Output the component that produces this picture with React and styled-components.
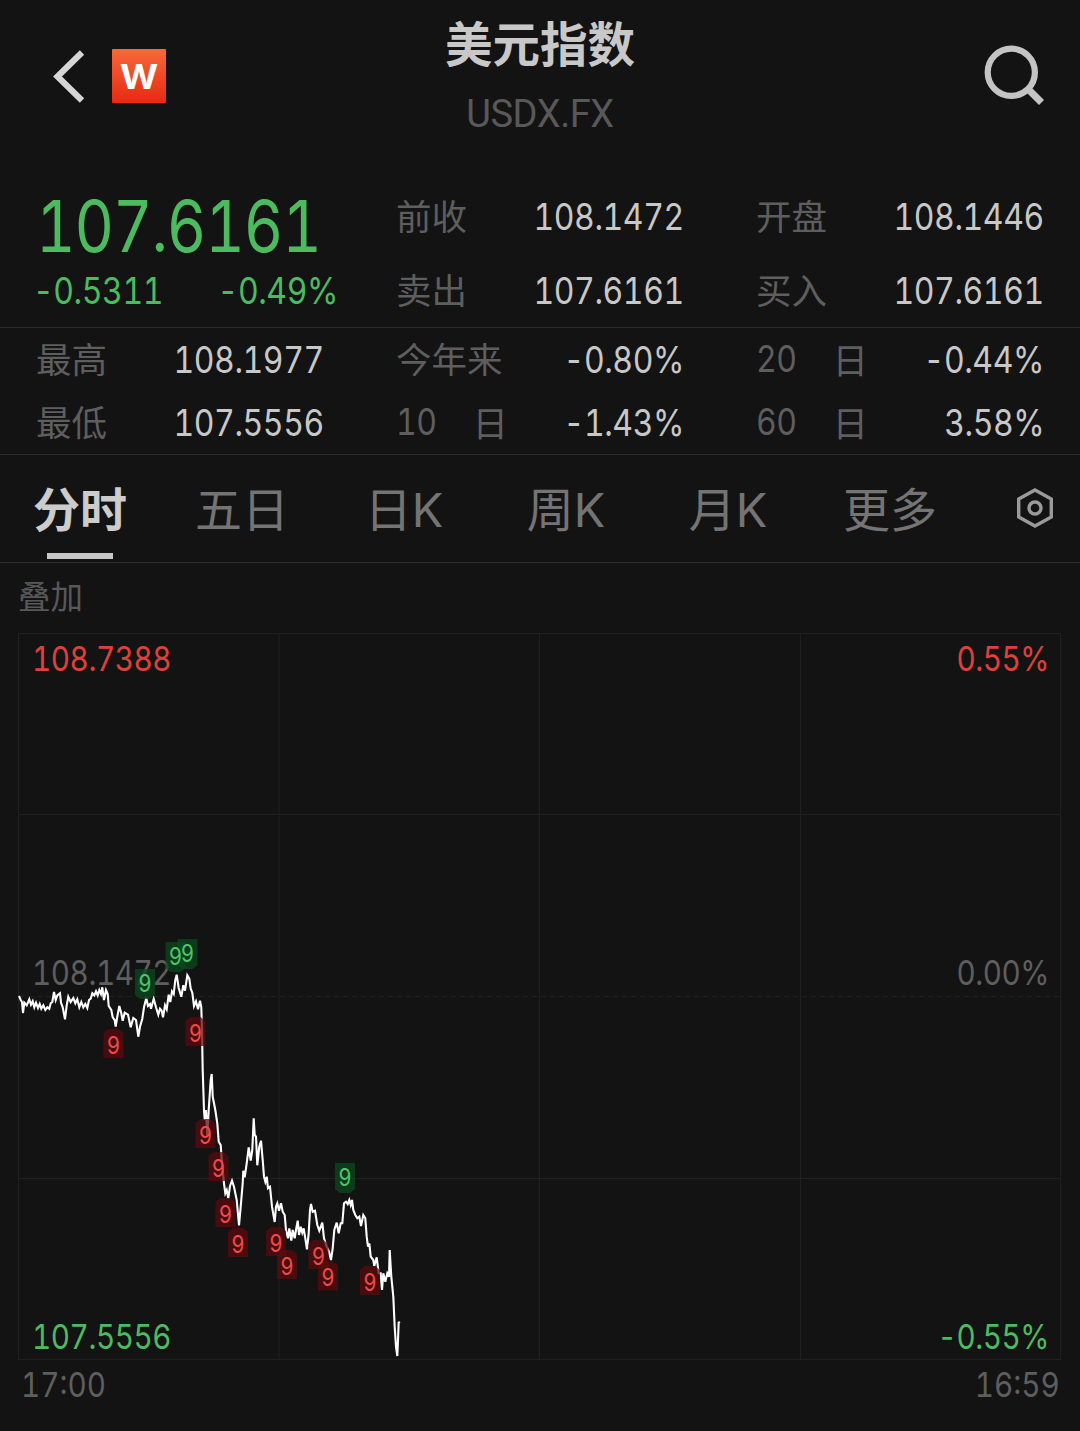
import React from 'react';
import styled, { createGlobalStyle } from 'styled-components';

const GlobalStyle = createGlobalStyle`
  * {
    box-sizing: border-box;
  }
  body {
    margin: 0;
    background: #131313;
    font-family: Inter, 'Noto Sans CJK SC', sans-serif;
    color: #c8c8c8;
  }
`;

const Page = styled.div`
  width: 1080px;
  height: 1431px;
  overflow: hidden;
  background: #131313;
`;

const Header = styled.header`
  display: grid;
  grid-template-columns: 166px 1fr 166px;
  height: 180px;
`;

const HeaderLeft = styled.div`
  display: flex;
  align-items: center;
  justify-content: space-between;
  height: 54px;
  margin-top: 49px;
  padding-left: 50px;
`;

const HeaderRight = styled.div`
  display: flex;
  justify-content: flex-end;
  margin-top: 43px;
  padding-right: 34px;
`;

const Logo = styled.div`
  display: flex;
  justify-content: center;
  width: 54px;
  height: 54px;
  border-radius: 1px;
  background: linear-gradient(#f8683a, #e62a12);
  color: #fff;
  font: 600 46px/47px Inter, sans-serif;
`;

const Titles = styled.div`
  display: flex;
  flex-direction: column;
  align-items: center;
`;

const Title = styled.h1`
  margin: 11px 0 0;
  font-family: 'Noto Sans CJK SC', sans-serif;
  font-size: 47.5px;
  line-height: 62px;
  font-weight: 700;
`;

const Code = styled.div`
  margin-top: 18px;
  font-family: Roboto, sans-serif;
  font-size: 38px;
  line-height: 46px;
  letter-spacing: -0.4px;
  color: #585858;
`;

const Quote = styled.section`
  display: grid;
  grid-template-columns: repeat(3, 288px);
  column-gap: 72px;
  height: 148px;
  padding: 0 36px;
  border-bottom: 1px solid #2b2b2b;
`;

const Column = styled.div`
  display: flex;
  flex-direction: column;
`;

const Price = styled.div`
  height: 86px;
  font-size: 71px;
  line-height: 93px;
  letter-spacing: -1.3px;
  font-feature-settings: 'tnum', 'calt' 0;
  transform: scaleX(0.86);
  transform-origin: left;
  color: #4cbb60;
`;

const Change = styled.div`
  display: flex;
  justify-content: space-between;
  width: 305px;
  margin-left: -3px;
  line-height: 50px;
`;

const Stats = styled.section`
  display: grid;
  grid-template-columns: repeat(3, 288px);
  grid-template-rows: 63px 63px;
  column-gap: 72px;
  height: 127px;
  padding: 0 36px;
  border-bottom: 1px solid #2b2b2b;
`;

const Item = styled.div`
  display: flex;
  align-items: center;
  justify-content: space-between;
  height: ${(props) => props.$height}px;
`;

const Label = styled.span`
  display: flex;
  justify-content: space-between;
  min-width: ${(props) => (props.$spread ? '112px' : '0')};
  margin-bottom: ${(props) => (props.$spread ? '1px' : '4px')};
  font-family: 'Noto Sans CJK SC', sans-serif;
  font-size: 35.5px;
  line-height: 50px;
  color: #5e5e5e;
`;

const Value = styled.span`
  font-family: Inter, sans-serif;
  font-size: 37.2px;
  line-height: 50px;
  letter-spacing: -0.5px;
  font-feature-settings: 'tnum', 'calt' 0;
  transform: scaleX(0.86);
  transform-origin: ${(props) => props.$origin || 'right'};
  color: ${(props) => props.$color || '#c8c8c8'};
`;

const Tabs = styled.nav`
  display: flex;
  height: 108px;
  border-bottom: 1px solid #2b2b2b;
`;

const Tab = styled.div`
  display: flex;
  flex-direction: column;
  align-items: center;
  width: 162px;
  padding: 21px 2px 0 0;
  font-family: Inter, 'Noto Sans CJK SC', sans-serif;
  font-size: 47px;
  line-height: 68px;
  font-weight: ${(props) => (props.$active ? 700 : 400)};
  color: ${(props) => (props.$active ? '#cccccc' : '#747474')};

  &::after {
    content: '';
    width: 66px;
    height: 6px;
    margin-top: 9px;
    background: ${(props) => (props.$active ? '#c8c8c8' : 'transparent')};
  }
`;

const Settings = styled.div`
  margin: 31px 0 0 43px;
`;

const Overlay = styled.div`
  height: 70px;
  padding: 11px 0 0 18px;
  font-size: 32.5px;
  line-height: 48px;
  color: #585858;
`;

const Chart = styled.svg`
  display: block;
  margin-left: 18px;
  font-family: Inter, sans-serif;
  font-feature-settings: 'tnum', 'calt' 0;
`;

const Times = styled.div`
  display: flex;
  justify-content: space-between;
  padding: 0 20px 0 21px;
  line-height: 48px;
`;

const Time = styled.span`
  font-size: 34.5px;
  font-feature-settings: 'tnum';
  transform: scaleX(0.86);
  transform-origin: ${(props) => props.$origin};
  color: #5e5e5e;
`;

const stats = [
  ['最高', '108.1977'],
  ['今年来', '-0.80%'],
  ['20 日', '-0.44%'],
  ['最低', '107.5556'],
  ['10 日', '-1.43%'],
  ['60 日', '3.58%'],
];

const tabs = ['分时', '五日', '日K', '周K', '月K', '更多'];

const line = `19,996 20.7,1000 22,1002 23,1013 24.3,1002.7 26.7,1005.3 29.3,999.3 31,1004.7 32.7,1001.3
34.3,1007.3 36,1002.7 38,1008 39.7,1004 41.3,1008.7 43.3,1005.3 45.3,1010 47.3,1007.3 49.3,1008.7
50.7,1003.3 52.3,1002 54,992 55.7,1000 57.3,995.3 60,993.3 61,1002.7 62.7,1007.3 65,1019.3 66.7,1005.3
68.3,996.7 70.7,1002 73.3,998 75.3,1003.3 77.3,999.3 79.3,1007.3 81.3,1002 83.3,1007.3 85.3,1004
87.3,1008 89,1000 90.7,998.7 92.3,993.3 94.3,995.3 96,991.3 97.7,995.3 99.3,990 101,994 102.3,987.3
104,1000 106,990 107.7,994 108.7,1006 111.3,1010 112.7,1017.3 114.7,1020 115.7,1026.7 117.3,1016.7
119.3,1006 121.3,1013.3 122.7,1020.7 124.7,1012.7 128,1014.7 130.7,1027.3 133.3,1018 136,1020
138.3,1036.7 140,1026.7 142.3,1018.7 144,1007.3 146.3,998 148,1006 150,1004 151,1008.7 153.7,998.7
156,1007.3 158.3,1014.7 160,1008.7 161.7,1010.7 163,1017.3 165,1005.3 166.7,1009.3 168.7,994.7
170.3,1002 172,991.3 173.7,994 175.3,980 176.7,974.7 178.7,988 181.3,996.7 183.3,985.3 185,990.7
187.3,975.3 189.3,978.7 190.7,988.7 192.3,992.7 194,1006 196,1001.3 198,1009.3 200,1000.7 201.3,1007.3
202,1030 202.7,1070 204,1110 204.7,1120 206,1110 207.3,1136.7 208.7,1110 210.7,1080 211.7,1074
212.7,1096.7 215.3,1110 217.3,1123.3 218.7,1141.7 220.7,1145 222,1163.3 224,1183.3 225.3,1193.3
226.7,1190 228.3,1198.3 230,1186 232,1180.7 234,1186.7 235.3,1193.3 236.7,1200 239,1225.3 240.7,1206.7
242.7,1183.3 243.3,1170.7 244.7,1177.3 246.7,1163.3 248.7,1147.3 250.7,1160.7 252.3,1150 253.7,1118.3
254.7,1135 256,1136.7 257.3,1165.3 259.3,1146.7 261,1140.7 262.7,1160 264,1176.7 265.3,1181.7
266.7,1176.7 268,1188.3 270,1186.7 272,1206.7 274.7,1222 276,1206.7 277.3,1203.3 279,1210.7 281,1203.3
282.7,1211.7 284.7,1215 286,1230 288,1238.3 289.3,1228.3 291.3,1240.7 292.7,1230 294.7,1238.3 296,1230
297.7,1220.7 299,1235 300.7,1226.7 302.3,1232.7 303.7,1228.3 305.3,1238.3 307,1249.3 308.7,1233.3
310,1210 311,1204 312.7,1211.7 315,1210.7 317.3,1225 319.3,1230.7 322.3,1222.7 324,1238.3 326.7,1246.7
329,1251.7 331,1260 332.7,1248.3 334.3,1230 336.7,1222.7 338.7,1233.3 340.7,1223.3 342.3,1223.3
344,1203.3 346,1201.7 347.7,1204 349.3,1200 350.7,1205 352,1200 353.3,1210 355.3,1215 357.3,1218.3
359.3,1216.7 361,1226 363.3,1215 365.3,1218.3 366.7,1236.7 368,1246.7 369.3,1243.3 370.7,1256.7
373.3,1260 374.3,1266 376.7,1257.3 378.7,1273.3 380.7,1273.3 382,1290 383.3,1273.3 385.3,1281.7
387.3,1273.3 389,1276.7 389.7,1250 391.3,1276.7 393.3,1296.7 394.7,1326.7 396,1346.7 397.3,1356
398,1340 398.7,1321.7 399.5,1323.3`;

const marks = [
  { x: 113.5, y: 1045 },
  { x: 195.5, y: 1033 },
  { x: 205.5, y: 1135 },
  { x: 218.5, y: 1168 },
  { x: 225.5, y: 1214 },
  { x: 238, y: 1244 },
  { x: 276, y: 1243 },
  { x: 287, y: 1266 },
  { x: 318.5, y: 1256 },
  { x: 328, y: 1277.5 },
  { x: 370, y: 1282 },
  { x: 145, y: 983, up: true },
  { x: 175.5, y: 956, up: true },
  { x: 187.5, y: 953, up: true },
  { x: 345, y: 1177, up: true },
];

const Stat = ({ label, value, height }) => {
  const [first, second] = label.split(' ');

  return (
    <Item $height={height}>
      {second ? (
        <Label $spread>
          <Value $origin="left" $color="#5e5e5e">
            {first}
          </Value>
          <span>{second}</span>
        </Label>
      ) : (
        <Label>{first}</Label>
      )}
      <Value>{value}</Value>
    </Item>
  );
};

// 배경은 선의 위아래 방향에 따라 모서리가 깎인 모양
const MarkBox = ({ x, y, up }) => (
  <path
    transform={`translate(${x} ${y})`}
    d={up ? 'M-10-14H10V12L5 16H-5L-10 12Z' : 'M-10 13H10V-12L5-16H-5L-10-12Z'}
    fill={up ? '#0b4a20' : '#5c0b0e'}
    fillOpacity="0.75"
  />
);

const ChartText = ({ x, y, end, color, children }) => (
  <text
    transform={`translate(${x} ${y}) scale(0.86 1)`}
    textAnchor={end ? 'end' : 'start'}
    fontSize="34.5"
    letterSpacing="-0.5"
    fill={color}
  >
    {children}
  </text>
);

const App = () => {
  return (
    <Page>
      <GlobalStyle />
      <Header>
        <HeaderLeft>
          <svg width="36" height="54" viewBox="0 0 36 54" fill="none">
            <path d="M32 3.5L7.5 27.5L32 51.5" stroke="#d6d6d6" strokeWidth="6.2" />
          </svg>
          <Logo>w</Logo>
        </HeaderLeft>
        <Titles>
          <Title>美元指数</Title>
          <Code>USDX.FX</Code>
        </Titles>
        <HeaderRight>
          <svg width="64" height="64" viewBox="0 0 64 64" fill="none">
            <g stroke="#c4c4c4" strokeWidth="6.2">
              <circle cx="29.3" cy="29.3" r="23.6" />
              <path d="M45 45L59.5 59.5" strokeWidth="7" />
            </g>
          </svg>
        </HeaderRight>
      </Header>

      <Quote>
        <Column>
          <Price>107.6161</Price>
          <Change>
            <Value $origin="left" $color="#4cbb60">-0.5311</Value>
            <Value $color="#4cbb60">-0.49%</Value>
          </Change>
        </Column>
        <Column>
          <Stat label="前收" value="108.1472" height={74} />
          <Stat label="卖出" value="107.6161" height={74} />
        </Column>
        <Column>
          <Stat label="开盘" value="108.1446" height={74} />
          <Stat label="买入" value="107.6161" height={74} />
        </Column>
      </Quote>

      <Stats>
        {stats.map(([label, value]) => (
          <Stat key={label} label={label} value={value} height={63} />
        ))}
      </Stats>

      <Tabs>
        {tabs.map((name, index) => (
          <Tab key={name} $active={index === 0}>
            {name}
          </Tab>
        ))}
        <Settings>
          <svg width="40" height="44" viewBox="0 0 40 44" fill="none">
            <g stroke="#9a9a9a" strokeWidth="3.4">
              <path d="M20 4L36.3 13V31L20 40L3.7 31V13Z" />
              <circle cx="20" cy="22" r="6" />
            </g>
          </svg>
        </Settings>
      </Tabs>

      <Overlay>叠加</Overlay>

      <Chart width="1044" height="728" viewBox="18 633 1044 728">
        <g stroke="#202020" fill="none">
          <rect x="18.5" y="633.5" width="1042" height="726" />
          <path d="M279 634V1359M539.5 634V1359M800.5 634V1359" />
          <path d="M19 814.5H1060M19 1178.5H1060" />
          <path d="M19 996.5H1060" strokeDasharray="5 4" />
        </g>
        <ChartText x={32} y={671} color="#e0403a">108.7388</ChartText>
        <ChartText x={1049} y={671} color="#e0403a" end>0.55%</ChartText>
        <ChartText x={32} y={984.5} color="#5e5e5e">108.1472</ChartText>
        <ChartText x={1049} y={984.5} color="#5e5e5e" end>0.00%</ChartText>
        <ChartText x={32} y={1348.5} color="#4cbb60">107.5556</ChartText>
        <ChartText x={1049} y={1348.5} color="#4cbb60" end>-0.55%</ChartText>
        <polyline points={line} fill="none" stroke="#ffffff" strokeWidth="2.1" />
        {marks.map((mark) => (
          <MarkBox key={mark.x} {...mark} />
        ))}
        {marks.map(({ x, y, up }) => (
          <text
            key={x}
            transform={`translate(${x} ${y + 8.5}) scale(0.86 1)`}
            textAnchor="middle"
            fontSize="24"
            fill={up ? '#4fc46a' : '#f04a4a'}
          >
            9
          </text>
        ))}
      </Chart>

      <Times>
        <Time $origin="left">17:00</Time>
        <Time $origin="right">16:59</Time>
      </Times>
    </Page>
  );
};

export default App;
